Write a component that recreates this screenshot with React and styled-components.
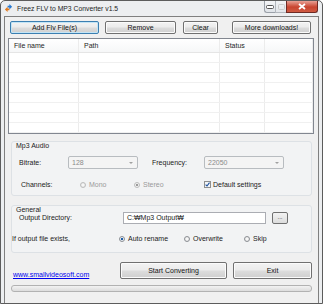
import React from 'react'
import styled, { createGlobalStyle } from 'styled-components'

const Global = createGlobalStyle`
  html, body { margin: 0; padding: 0; background: #ffffff; }
  body { font-family: "Liberation Sans", Arial, sans-serif; font-size: 7px; color: #1b1b1b; }
`

const rows = Array.from({ length: 9 })

export default function App() {
  return (
    <>
      <Global />
      <Window>
        <TitleBar>
          <AppIcon viewBox="0 0 10 10">
            <path d="M1 7 L4 4 L4 6 L6 6 L6 8 L4 8 L4 10 Z" fill="#e07a1f" transform="translate(0,-1)" />
            <path d="M9 3 L6 0 L6 2 L4 2 L4 4 L6 4 L6 6 Z" fill="#2a7ad0" />
          </AppIcon>
          <Title>Freez FLV to MP3 Converter v1.5</Title>
          <Caption>
            <CapButton>
              <svg width="8" height="4" viewBox="0 0 8 4"><rect x="0.5" y="0.5" width="7" height="3" rx="1" fill="#fff" stroke="#555" /></svg>
            </CapButton>
            <CapButton faded>
              <svg width="7" height="6" viewBox="0 0 7 6"><rect x="0.5" y="0.5" width="6" height="5" rx="1" fill="none" stroke="#bbb" /></svg>
            </CapButton>
            <CloseButton>
              <svg width="8" height="7" viewBox="0 0 8 7"><path d="M1 1 L7 6 M7 1 L1 6" stroke="#fff" strokeWidth="1.8" /></svg>
            </CloseButton>
          </Caption>
        </TitleBar>

        <Client>
          <ButtonRow>
            <Button w={89} focused>Add Flv File(s)</Button>
            <Button w={71}>Remove</Button>
            <Button w={35} style={{ marginLeft: 1 }}>Clear</Button>
            <Button w={79} style={{ marginLeft: 8 }}>More downloads!</Button>
          </ButtonRow>

          <ListBox>
            <HeaderRow>
              <Cell>File name</Cell>
              <Cell>Path</Cell>
              <Cell>Status</Cell>
              <Cell />
            </HeaderRow>
            {rows.map((_, i) => (
              <GridRow key={i}>
                <Cell /><Cell /><Cell /><Cell />
              </GridRow>
            ))}
          </ListBox>

          <Group h={55}>
            <Legend>Mp3 Audio</Legend>
            <FieldRow top={11}>
              <Label w={49}>Bitrate:</Label>
              <Select w={70}><span>128</span><Arrow /></Select>
              <Label w={52} style={{ marginLeft: 14 }}>Frequency:</Label>
              <Select w={80}><span>22050</span><Arrow /></Select>
            </FieldRow>
            <FieldRow top={9}>
              <Label w={61} style={{ paddingLeft: 2 }}>Channels:</Label>
              <Radio w={54} disabled>Mono</Radio>
              <Radio w={70} disabled checked>Stereo</Radio>
              <Check>Default settings</Check>
            </FieldRow>
          </Group>

          <Group h={48} style={{ marginTop: 9 }}>
            <Legend>General</Legend>
            <FieldRow top={2}>
              <Label w={104}>Output Directory:</Label>
              <TextBox>C:₩Mp3 Output₩</TextBox>
              <SmallButton>...</SmallButton>
            </FieldRow>
            <FieldRow top={8} style={{ marginLeft: -7 }}>
              <Label w={107}>If output file exists,</Label>
              <Radio w={65} checked>Auto rename</Radio>
              <Radio w={60}>Overwrite</Radio>
              <Radio w={40}>Skip</Radio>
            </FieldRow>
          </Group>

          <BottomRow>
            <Link href="#">www.smallvideosoft.com</Link>
            <Button w={107} h={17}>Start Converting</Button>
            <Button w={79} h={17}>Exit</Button>
          </BottomRow>

          <Progress />
        </Client>
      </Window>
    </>
  )
}

const Window = styled.div`
  width: 323px;
  height: 304px;
  box-sizing: border-box;
  border: 1px solid #5c5c5c;
  border-radius: 5px 5px 0 0;
  background: #eceef0;
  display: flex;
  flex-direction: column;
`

const TitleBar = styled.div`
  height: 15px;
  display: flex;
  align-items: center;
  padding-left: 3px;
`

const AppIcon = styled.svg`
  width: 9px;
  height: 9px;
  margin-right: 4px;
`

const Title = styled.div`
  font-size: 6.8px;
  color: #1e1e1e;
  flex: 1;
`

const Caption = styled.div`
  display: flex;
  align-self: flex-start;
  margin-right: 4px;
`

const CapButton = styled.div`
  width: 11px;
  height: 12px;
  box-sizing: border-box;
  border: 1px solid #9aa0a8;
  border-right: none;
  border-top: none;
  background: linear-gradient(#f4f5f7, #dfe3e8);
  display: flex;
  align-items: center;
  justify-content: center;
  opacity: ${p => (p.faded ? 0.7 : 1)};
  &:first-child { border-radius: 0 0 0 3px; }
`

const CloseButton = styled.div`
  width: 32px;
  height: 12px;
  box-sizing: border-box;
  border: 1px solid #6e2a24;
  border-top: none;
  border-radius: 0 0 3px 0;
  background: linear-gradient(#e9a195, #c8442f 55%, #cf5a42);
  display: flex;
  align-items: center;
  justify-content: center;
`

const Client = styled.div`
  flex: 1;
  margin: 0 3px 0 3px;
  border: 1px solid #7f7f7f;
  border-bottom: none;
  background: #f0f0f0;
  display: flex;
  flex-direction: column;
  padding-top: 4px;
`

const ButtonRow = styled.div`
  display: flex;
  gap: 6px;
  padding-left: 5px;
`

const Button = styled.div`
  width: ${p => p.w}px;
  height: ${p => p.h || 13}px;
  box-sizing: border-box;
  border: 1px solid ${p => (p.focused ? '#3c7fb1' : '#707070')};
  border-radius: 2px;
  background: linear-gradient(#f3f3f3 0%, #ebebeb 48%, #dddddd 52%, #cfcfcf 100%);
  box-shadow: inset 0 0 0 1px ${p => (p.focused ? '#c4e5f6' : '#fbfbfb')};
  display: flex;
  align-items: center;
  justify-content: center;
  color: #111;
  font-size: 7px;
`

const ListBox = styled.div`
  margin: 4px 0 0 3px;
  width: 306px;
  height: 96px;
  box-sizing: border-box;
  border: 1px solid #828790;
  background: #fff;
  overflow: hidden;
`

const HeaderRow = styled.div`
  display: grid;
  grid-template-columns: 70px 141px 45px 1fr;
  height: 13px;
  border-bottom: 1px solid #e5e5e5;
  background: linear-gradient(#ffffff, #f6f7f8);
  align-items: center;
`

const GridRow = styled.div`
  display: grid;
  grid-template-columns: 70px 141px 45px 1fr;
  height: 9px;
  border-bottom: 1px solid #f0f0f0;
`

const Cell = styled.div`
  height: 100%;
  border-right: 1px solid #ececec;
  padding-left: 5px;
  display: flex;
  align-items: center;
  color: #1e1e1e;
`

const Group = styled.div`
  position: relative;
  margin: 7px 0 0 6px;
  width: 301px;
  height: ${p => p.h}px;
  box-sizing: border-box;
  border: 1px solid #dde1e5;
  border-radius: 3px;
  background: #f2f3f4;
  padding: 3px 0 0 7px;
`

const Legend = styled.div`
  position: absolute;
  top: 0;
  left: 3px;
  padding: 0 1px;
  font-size: 7px;
`

const FieldRow = styled.div`
  display: flex;
  align-items: center;
  margin-top: ${p => p.top}px;
  height: 13px;
`

const Label = styled.div`
  width: ${p => p.w}px;
  flex-shrink: 0;
  box-sizing: border-box;
`

const Select = styled.div`
  width: ${p => p.w}px;
  height: 13px;
  box-sizing: border-box;
  border: 1px solid #b8bcc0;
  border-radius: 2px;
  background: #f4f4f4;
  display: flex;
  align-items: center;
  justify-content: space-between;
  padding: 0 4px 0 3px;
  color: #8a8a8a;
`

const Arrow = styled.span`
  width: 0;
  height: 0;
  border-left: 2px solid transparent;
  border-right: 2px solid transparent;
  border-top: 2px solid #a0a0a0;
`

const RadioWrap = styled.div`
  width: ${p => p.w}px;
  display: flex;
  align-items: center;
  gap: 3px;
  color: ${p => (p.disabled ? '#9a9a9a' : '#1b1b1b')};
  flex-shrink: 0;
`

const Dot = styled.span`
  width: 6px;
  height: 6px;
  box-sizing: border-box;
  border-radius: 50%;
  border: 1px solid ${p => (p.disabled ? '#bcbcbc' : '#8c8f94')};
  background: ${p => (p.checked
    ? (p.disabled ? 'radial-gradient(#9b9b9b 35%, #f2f2f2 45%)' : 'radial-gradient(#1f5fa8 38%, #e8eef5 48%)')
    : 'radial-gradient(#ffffff, #dedede)')};
`

function Radio({ w, disabled, checked, children }) {
  return (
    <RadioWrap w={w} disabled={disabled}>
      <Dot disabled={disabled} checked={checked} />
      {children}
    </RadioWrap>
  )
}

const CheckWrap = styled.div`
  display: flex;
  align-items: center;
  gap: 2px;
`

const Box = styled.span`
  width: 7px;
  height: 7px;
  box-sizing: border-box;
  border: 1px solid #8e8f8f;
  background: #f4f6f8;
  display: flex;
  align-items: center;
  justify-content: center;
`

function Check({ children }) {
  return (
    <CheckWrap>
      <Box>
        <svg width="5" height="5" viewBox="0 0 5 5"><path d="M0.6 2.6 L2 4 L4.5 0.6" fill="none" stroke="#1c4f9c" strokeWidth="1.1" /></svg>
      </Box>
      {children}
    </CheckWrap>
  )
}

const TextBox = styled.div`
  width: 143px;
  height: 12px;
  box-sizing: border-box;
  border: 1px solid #abadb3;
  background: #fff;
  display: flex;
  align-items: center;
  padding-left: 3px;
`

const SmallButton = styled.div`
  width: 16px;
  height: 12px;
  margin-left: 6px;
  box-sizing: border-box;
  border: 1px solid #707070;
  border-radius: 2px;
  background: linear-gradient(#f3f3f3, #dcdcdc);
  display: flex;
  align-items: center;
  justify-content: center;
  font-size: 6px;
  line-height: 1;
  padding-bottom: 2px;
`

const BottomRow = styled.div`
  display: flex;
  align-items: center;
  gap: 6px;
  margin: 9px 0 0 0;
`

const Link = styled.a`
  width: 109px;
  box-sizing: border-box;
  padding-left: 8px;
  padding-top: 7px;
  color: #0000ee;
  text-decoration: underline;
`

const Progress = styled.div`
  margin: 6px 0 0 6px;
  width: 301px;
  height: 7px;
  box-sizing: border-box;
  border: 1px solid #b2b2b2;
  border-radius: 3px;
  background: linear-gradient(#f3f3f3, #dcdcdc);
`
